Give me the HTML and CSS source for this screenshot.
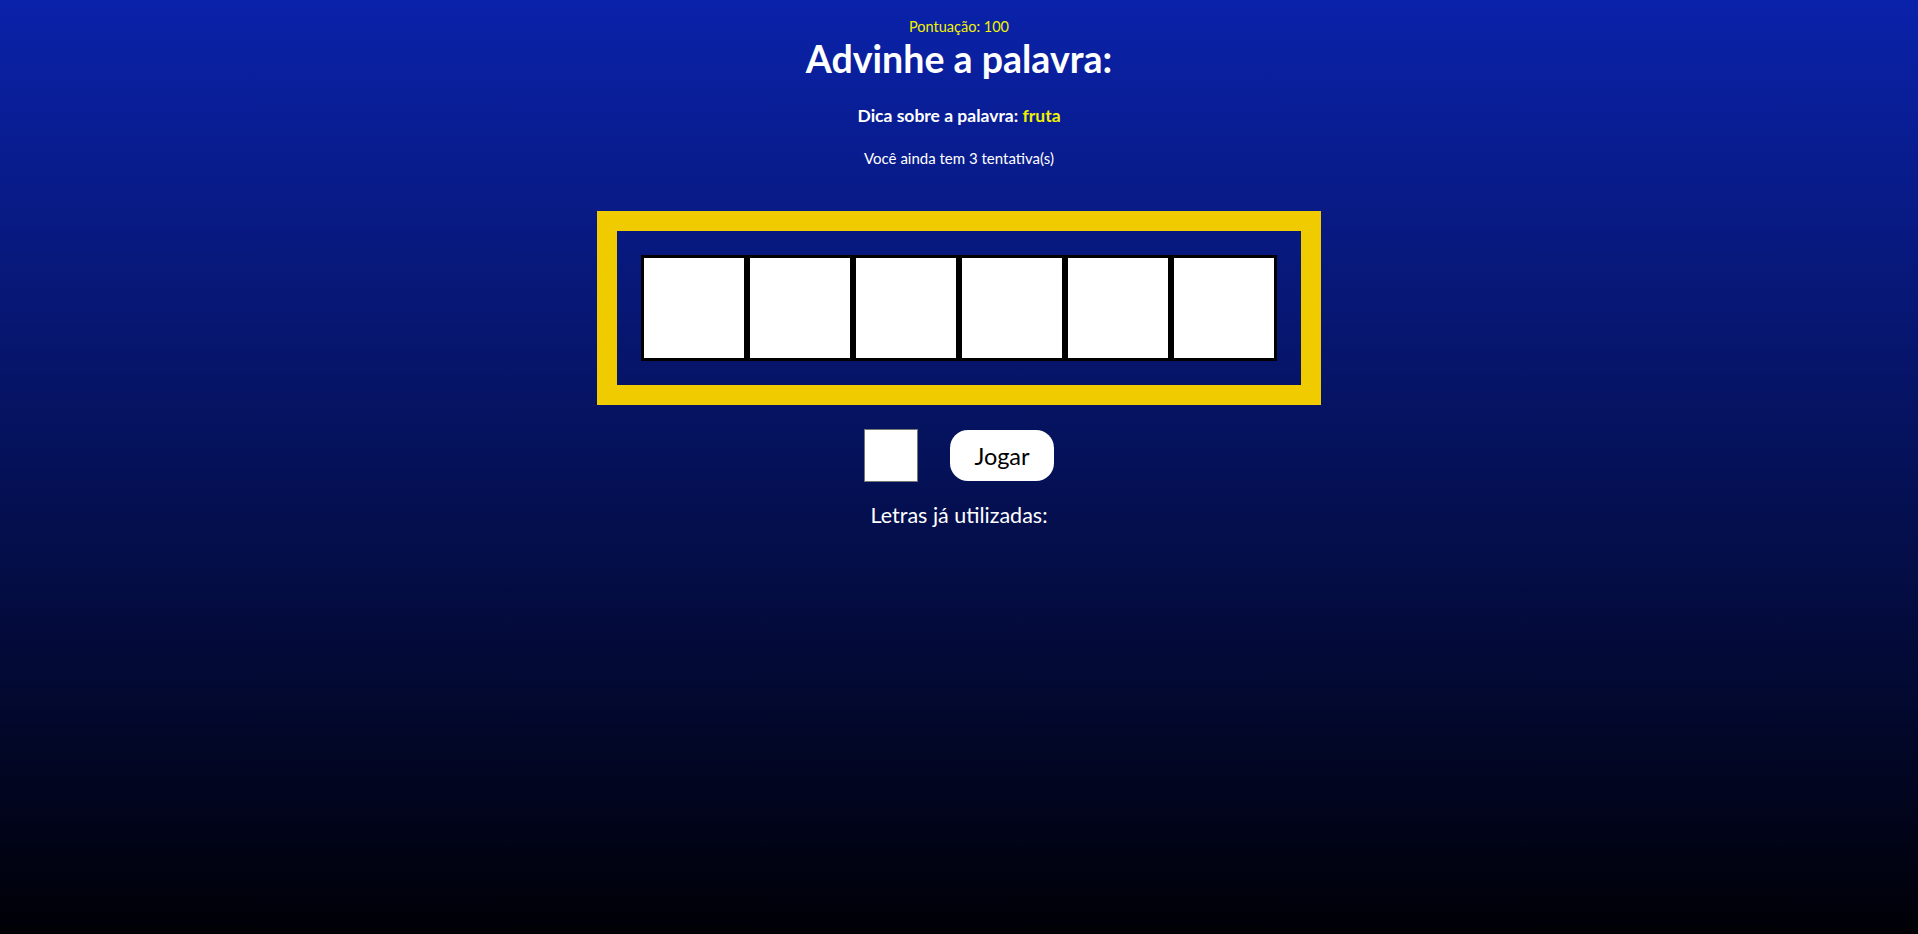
FILE: index.html
```html
<!DOCTYPE html>
<html lang="pt-BR">
<head>
<meta charset="utf-8">
<title>Advinhe a palavra</title>
<link rel="stylesheet" href="styles.css">
</head>
<body>
<main class="game">
  <p class="score">Pontuação: 100</p>
  <h1 class="title">Advinhe a palavra:</h1>
  <p class="hint">Dica sobre a palavra: <span class="hint-word">fruta</span></p>
  <p class="tries">Você ainda tem 3 tentativa(s)</p>
  <div class="board">
    <div class="tile"></div>
    <div class="tile"></div>
    <div class="tile"></div>
    <div class="tile"></div>
    <div class="tile"></div>
    <div class="tile"></div>
  </div>
  <div class="controls">
    <input class="letter-input" type="text" maxlength="1">
    <button class="play-btn" type="button">Jogar</button>
  </div>
  <p class="used">Letras já utilizadas:</p>
</main>
</body>
</html>
```
FILE: styles.css
```css
html, body {
  margin: 0;
  padding: 0;
}
body {
  min-height: 100vh;
  background: linear-gradient(to bottom, #0a22aa 0%, #000006 100%);
  font-family: Lato, "Open Sans", sans-serif;
  color: #ffffff;
}
.game {
  display: flex;
  flex-direction: column;
  align-items: center;
}
.score {
  margin: 18px 0 0;
  font-size: 14.5px;
  line-height: 18px;
  color: #f2f200;
}
.title {
  margin: 0;
  font-size: 37.5px;
  line-height: 45px;
  font-weight: 700;
}
.hint {
  margin: 25px 0 0;
  font-size: 17.5px;
  line-height: 20px;
  font-weight: 700;
}
.hint-word {
  color: #f2f200;
}
.tries {
  margin: 23px 0 0;
  font-size: 15px;
  line-height: 18px;
}
.board {
  margin-top: 44px;
  display: flex;
  border: 20px solid #f0cb00;
  padding: 24px;
}
.tile {
  width: 100px;
  height: 100px;
  border: 3px solid #000;
  background: #fff;
}
.controls {
  margin-top: 24px;
  display: flex;
  align-items: center;
  gap: 32px;
}
.letter-input {
  box-sizing: border-box;
  width: 54px;
  height: 53px;
  margin: 0;
  border: 1px solid #767676;
  background: #fff;
  padding: 0;
}
.play-btn {
  box-sizing: border-box;
  width: 104px;
  height: 51px;
  margin: 0;
  border: none;
  border-radius: 18px;
  background: #fff;
  color: #000;
  font-family: Lato, "Open Sans", sans-serif;
  font-size: 23.5px;
}
.used {
  margin: 21px 0 0;
  font-size: 21.5px;
  line-height: 25px;
}
```
